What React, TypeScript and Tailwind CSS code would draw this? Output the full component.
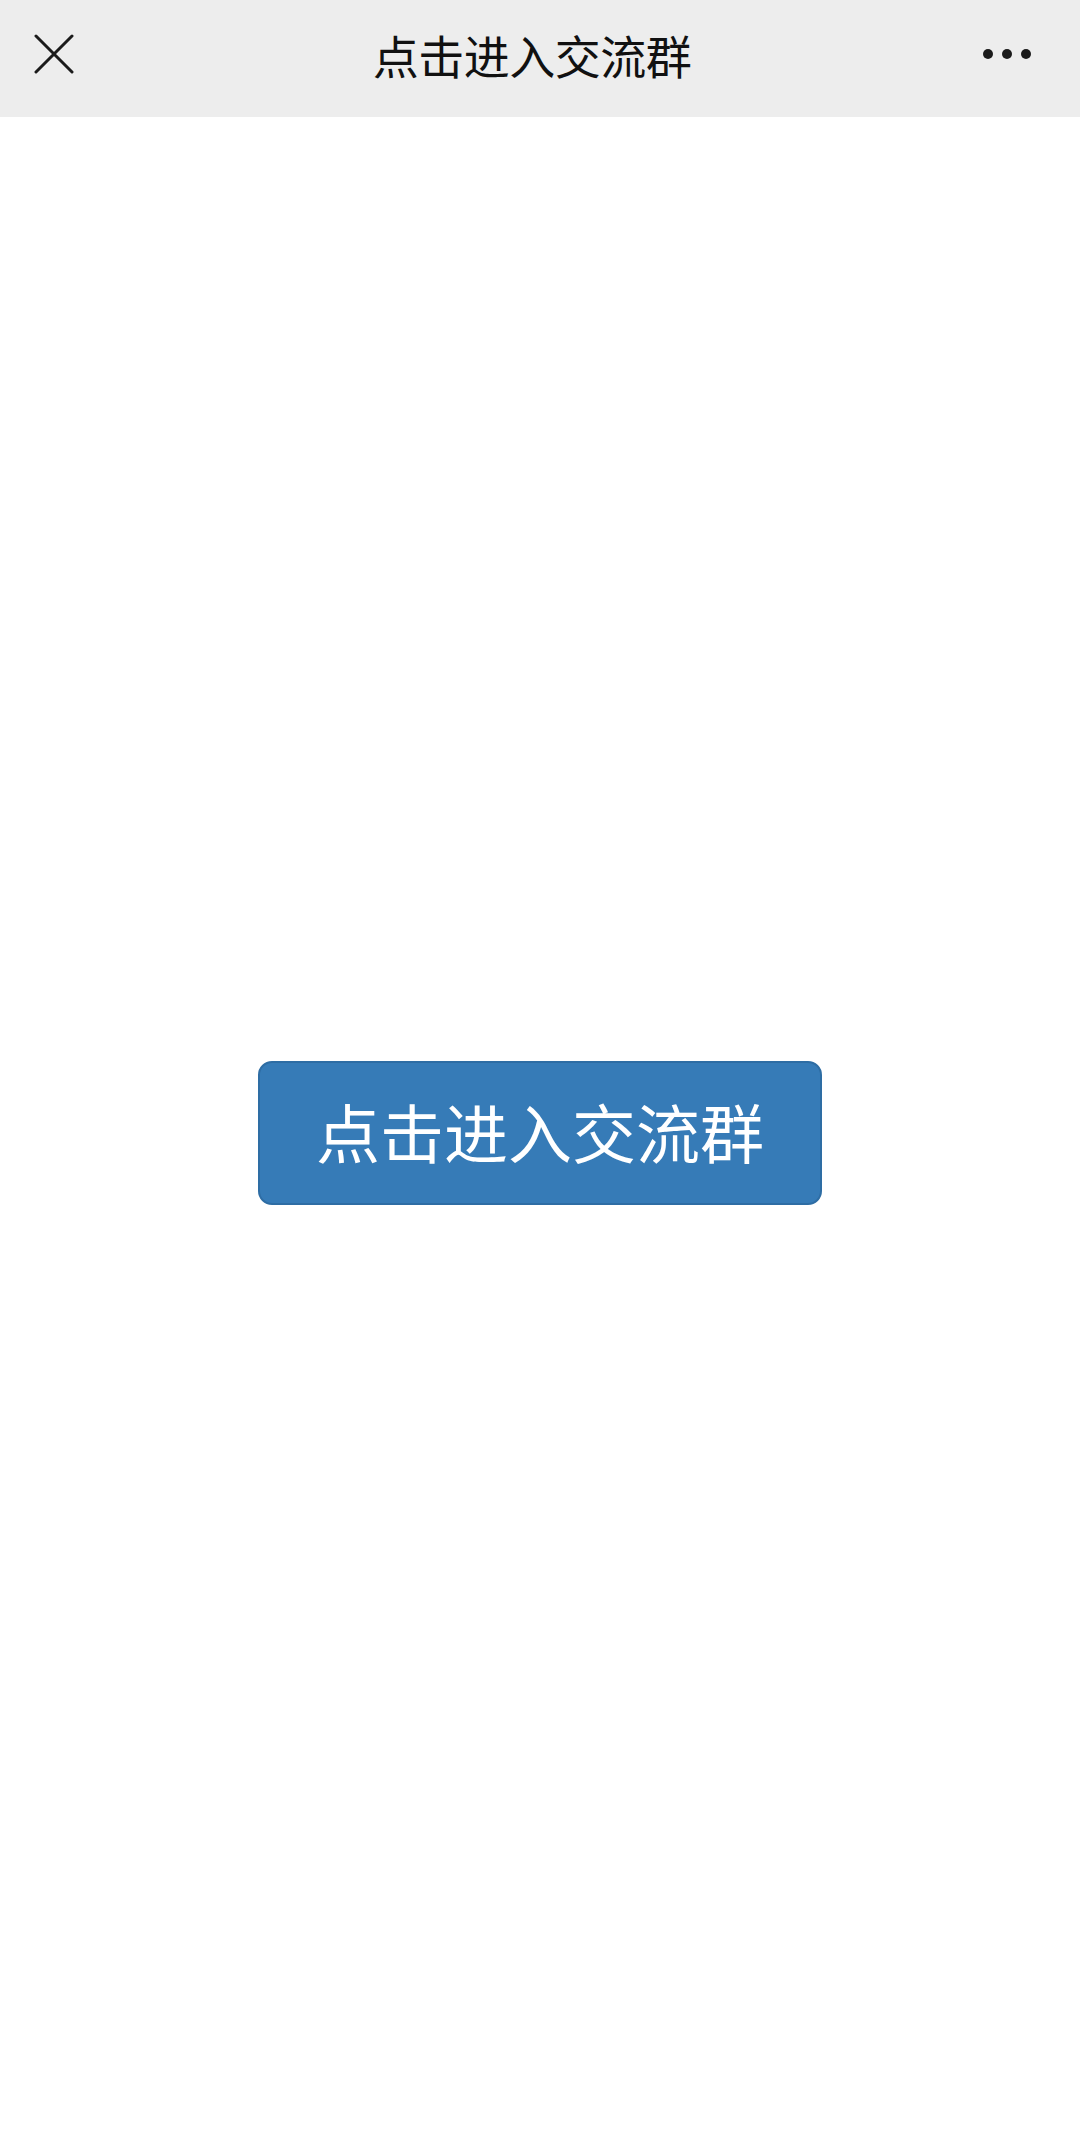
export default function App() {
  return (
    <div
      className="flex min-h-[2138px] w-full flex-col bg-white"
      style={{ fontFamily: '"Noto Sans CJK SC", "Noto Sans", sans-serif' }}
    >
      <header className="flex h-[117px] items-center justify-between bg-[#ededed] pb-[9px] pl-[34px] pr-[48px]">
        <button className="flex h-[40px] w-[40px] items-center justify-center">
          <svg width="40" height="40" viewBox="0 0 40 40" fill="none">
            <path d="M2 2 L38 38 M38 2 L2 38" stroke="#1b1b1b" strokeWidth="3" strokeLinecap="round" />
          </svg>
        </button>
        <h1 className="ml-[8px] text-[46px] font-normal leading-none tracking-[-0.5px] text-[#111]">点击进入交流群</h1>
        <button className="flex h-[40px] w-[50px] items-center justify-center gap-[9px]">
          <span className="h-[10px] w-[10px] rounded-full bg-[#1b1b1b]" />
          <span className="h-[10px] w-[10px] rounded-full bg-[#1b1b1b]" />
          <span className="h-[10px] w-[10px] rounded-full bg-[#1b1b1b]" />
        </button>
      </header>

      <main className="flex flex-1 flex-col items-center pt-[944px]">
        <a
          href="#"
          className="flex h-[144px] w-[564px] items-center justify-center rounded-[14px] border-2 border-[#2e6da4] bg-[#367bb7] pb-[7px] text-[64px] leading-none text-white"
        >
          点击进入交流群
        </a>
      </main>
    </div>
  )
}
